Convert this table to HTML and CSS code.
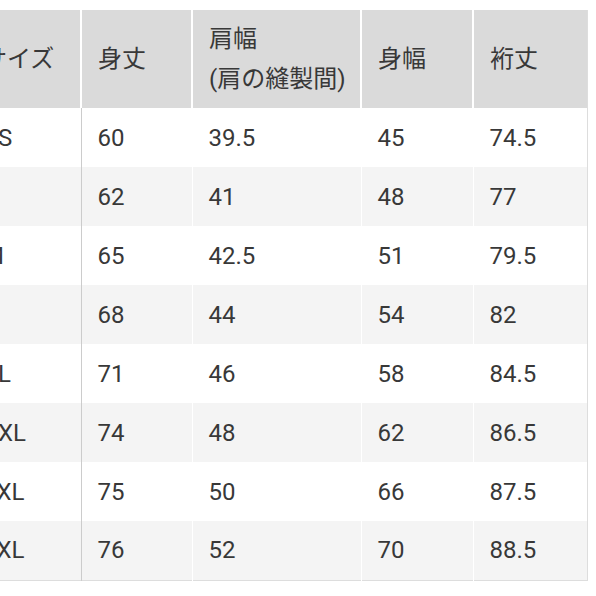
FILE: index.html
```html
<!DOCTYPE html>
<html lang="ja">
<head>
<meta charset="utf-8">
<link rel="stylesheet" href="styles.css">
</head>
<body>
<div class="viewport">
  <table class="size-table">
    <colgroup>
      <col class="c-size">
      <col class="c-len">
      <col class="c-shoulder">
      <col class="c-width">
      <col class="c-sleeve">
    </colgroup>
    <thead>
      <tr>
        <th>サイズ</th>
        <th>身丈</th>
        <th>肩幅<br>(肩の縫製間)</th>
        <th>身幅</th>
        <th>裄丈</th>
      </tr>
    </thead>
    <tbody>
      <tr><td>XS</td><td>60</td><td>39.5</td><td>45</td><td>74.5</td></tr>
      <tr><td>S</td><td>62</td><td>41</td><td>48</td><td>77</td></tr>
      <tr><td>M</td><td>65</td><td>42.5</td><td>51</td><td>79.5</td></tr>
      <tr><td>L</td><td>68</td><td>44</td><td>54</td><td>82</td></tr>
      <tr><td>XL</td><td>71</td><td>46</td><td>58</td><td>84.5</td></tr>
      <tr><td>XXL</td><td>74</td><td>48</td><td>62</td><td>86.5</td></tr>
      <tr><td>3XL</td><td>75</td><td>50</td><td>66</td><td>87.5</td></tr>
      <tr><td>4XL</td><td>76</td><td>52</td><td>70</td><td>88.5</td></tr>
    </tbody>
  </table>
</div>
</body>
</html>
```

FILE: styles.css
```css
html, body {
  margin: 0;
  padding: 0;
  background: #ffffff;
}

.viewport {
  width: 596px;
  height: 596px;
  overflow: hidden;
  padding-top: 10px;
  box-sizing: border-box;
}

.size-table {
  margin-left: -32px;
  border-collapse: collapse;
  table-layout: fixed;
  width: 619px;
  font-family: Roboto, "Noto Sans CJK JP", sans-serif;
  font-size: 24px;
  color: #383838;
  border-right: 1px solid #dddddd;
  border-bottom: 1px solid #dddddd;
}

.c-size { width: 113px; }
.c-len { width: 111px; }
.c-shoulder { width: 169px; }
.c-width { width: 112px; }
.c-sleeve { width: 114px; }

.size-table th {
  background: #dadada;
  font-weight: normal;
  text-align: left;
  height: 98px;
  padding: 0 0 0 16px;
  line-height: 40px;
  vertical-align: middle;
  border-left: 2px solid #ffffff;
  box-sizing: border-box;
}

.size-table th:first-child {
  border-left: none;
  padding-left: 15px;
}

.size-table td {
  height: 59px;
  padding: 0 0 0 16px;
  line-height: 30px;
  vertical-align: middle;
  border-left: 1px solid #ffffff;
  box-sizing: border-box;
}

.size-table td:first-child {
  border-left: none;
  border-right: 1px solid #cccccc;
  padding-left: 15px;
}

.size-table tbody tr:nth-child(even) td {
  background: #f4f4f4;
}
```
